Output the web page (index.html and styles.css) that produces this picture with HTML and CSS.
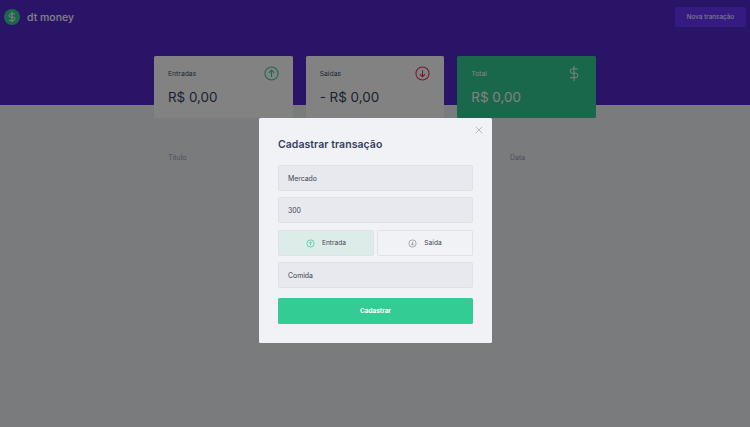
FILE: index.html
```html
<!DOCTYPE html>
<html lang="en">
<head>
    <meta charset="UTF-8">
    <title>dt money</title>
    <link rel="stylesheet" href="styles.css">
</head>
<body>
    <header class="header">
        <div class="logo">
            <svg class="logo-icon" viewBox="0 0 16 16">
                <circle cx="8" cy="8" r="8" fill="#33cc95"/>
                <path d="M8 2.6v10.8M10.8 5H6.7a1.6 1.6 0 0 0 0 3.2h2.6a1.6 1.6 0 0 1 0 3.2H5" fill="none" stroke="#fff" stroke-width="1"/>
            </svg>
            <span class="logo-text">dt money</span>
        </div>
        <button class="new-button">Nova transação</button>
    </header>

    <main class="container">
        <section class="summary">
            <div class="card">
                <div class="card-top">
                    <span>Entradas</span>
                    <svg class="card-icon" viewBox="0 0 16 16" fill="none" stroke="#33cc95" stroke-width="1.1">
                        <circle cx="8" cy="8" r="7"/>
                        <path d="M8 11.6V4.6M5.2 7.4 8 4.6l2.8 2.8"/>
                    </svg>
                </div>
                <strong>R$ 0,00</strong>
            </div>
            <div class="card">
                <div class="card-top">
                    <span>Saídas</span>
                    <svg class="card-icon" viewBox="0 0 16 16" fill="none" stroke="#e52e4d" stroke-width="1.1">
                        <circle cx="8" cy="8" r="7"/>
                        <path d="M8 4.4v7M5.2 8.6 8 11.4l2.8-2.8"/>
                    </svg>
                </div>
                <strong>- R$ 0,00</strong>
            </div>
            <div class="card card-total">
                <div class="card-top">
                    <span>Total</span>
                    <svg class="card-icon dollar-icon" viewBox="0 0 12 16" fill="none" stroke="#fff" stroke-width="1">
                        <path d="M6 .5v15M9.6 3.4H4.4a2.2 2.2 0 0 0 0 4.4h3.2a2.2 2.2 0 0 1 0 4.4H2"/>
                    </svg>
                </div>
                <strong>R$ 0,00</strong>
            </div>
        </section>

        <div class="table-head">
            <span>Título</span>
            <span>Valor</span>
            <span>Categoria</span>
            <span>Data</span>
        </div>
    </main>

    <div class="overlay">
        <div class="modal">
            <button class="close" aria-label="Fechar">
                <svg viewBox="0 0 8 8" fill="none" stroke="#a6a9b5" stroke-width=".8">
                    <path d="M.8.8l6.4 6.4M7.2.8.8 7.2"/>
                </svg>
            </button>
            <h2>Cadastrar transação</h2>
            <div class="field">Mercado</div>
            <div class="field">300</div>
            <div class="type-row">
                <button class="type-button type-active">
                    <svg viewBox="0 0 10 10" fill="none" stroke="#33cc95" stroke-width=".8">
                        <circle cx="5" cy="5" r="4"/>
                        <path d="M5 7V3.2M3.5 4.6 5 3.2l1.5 1.4"/>
                    </svg>
                    Entrada
                </button>
                <button class="type-button">
                    <svg viewBox="0 0 10 10" fill="none" stroke="#8a8d96" stroke-width=".8">
                        <circle cx="5" cy="5" r="4"/>
                        <path d="M5 3v3.8M3.5 5.4 5 6.8l1.5-1.4"/>
                    </svg>
                    Saída
                </button>
            </div>
            <div class="field">Comida</div>
            <button class="submit">Cadastrar</button>
        </div>
    </div>
</body>
</html>
```

FILE: styles.css
```css
* { box-sizing: border-box; }
body { margin: 0; background: #f0f2f5; font-family: Inter, "Open Sans", sans-serif; color: #363f5f; height: 427px; overflow: hidden; }
button { font-family: inherit; border: 0; cursor: pointer; }

.header { height: 105px; background: #5429cc; display: flex; justify-content: space-between; align-items: flex-start; padding: 7px 4px 0 4px; }
.logo { display: flex; align-items: center; gap: 7px; padding-top: 2px; }
.logo-icon { width: 16px; height: 16px; }
.logo-text { color: #fff; font-size: 10.5px; font-weight: 500; }
.new-button { width: 71px; height: 20px; padding: 0; background: #6933ff; color: #fff; font-size: 6.4px; border-radius: 1.5px; }

.container { width: 442px; margin: -49px auto 0; }
.summary { display: grid; grid-template-columns: repeat(3, 1fr); gap: 13px; }
.card { height: 62px; background: #fff; border-radius: 1.5px; padding: 10px 14px 0; }
.card-top { display: flex; justify-content: space-between; align-items: center; height: 15px; font-size: 6.8px; color: #40505f; }
.card strong { display: block; margin-top: 8px; font-size: 13.4px; font-weight: 400; line-height: 17px; color: #363f5f; }
.card-icon { width: 15px; height: 15px; flex: none; }
.dollar-icon { width: 12px; height: 17px; margin-right: 2px; }
.card-total { background: #33cc95; }
.card-total .card-top, .card-total strong { color: #fff; }

.table-head { display: grid; grid-template-columns: 114px 114px 114px 1fr; margin-top: 35px; padding-left: 14px; font-size: 7px; color: #969cb3; }

.overlay { position: fixed; inset: 0; background: rgba(0, 0, 0, 0.49); display: flex; justify-content: center; align-items: flex-start; padding-top: 118px; }
.modal { position: relative; width: 233px; height: 225px; margin-left: 1px; background: #f0f2f5; border-radius: 1.5px; padding: 19px; }
.modal h2 { margin: 0 0 13px; font-size: 10.5px; font-weight: 600; line-height: 15px; letter-spacing: 0.05px; color: #363f5f; }
.close { position: absolute; top: 8px; right: 9px; width: 8px; height: 8px; padding: 0; background: none; display: flex; }
.close svg { width: 8px; height: 8px; }

.field { height: 26px; margin-bottom: 6px; padding: 0 9px; background: #e7e9ee; border: 1px solid #e0e1e5; border-radius: 1.5px; display: flex; align-items: center; font-size: 6.9px; color: #3f4450; }
.type-row { display: grid; grid-template-columns: 1fr 1fr; gap: 3px; margin: 7px 0 6px; }
.type-button { height: 26px; background: transparent; border: 1px solid #e0e1e5; border-radius: 1.5px; display: flex; align-items: center; justify-content: center; gap: 7px; font-size: 6.6px; color: #3f4450; }
.type-button svg { width: 9px; height: 9px; }
.type-active { background: #dcece8; }
.submit { display: block; width: 100%; height: 26px; margin-top: 10px; background: #33cc95; color: #fff; font-size: 6.4px; font-weight: 700; border-radius: 1.5px; }
```
